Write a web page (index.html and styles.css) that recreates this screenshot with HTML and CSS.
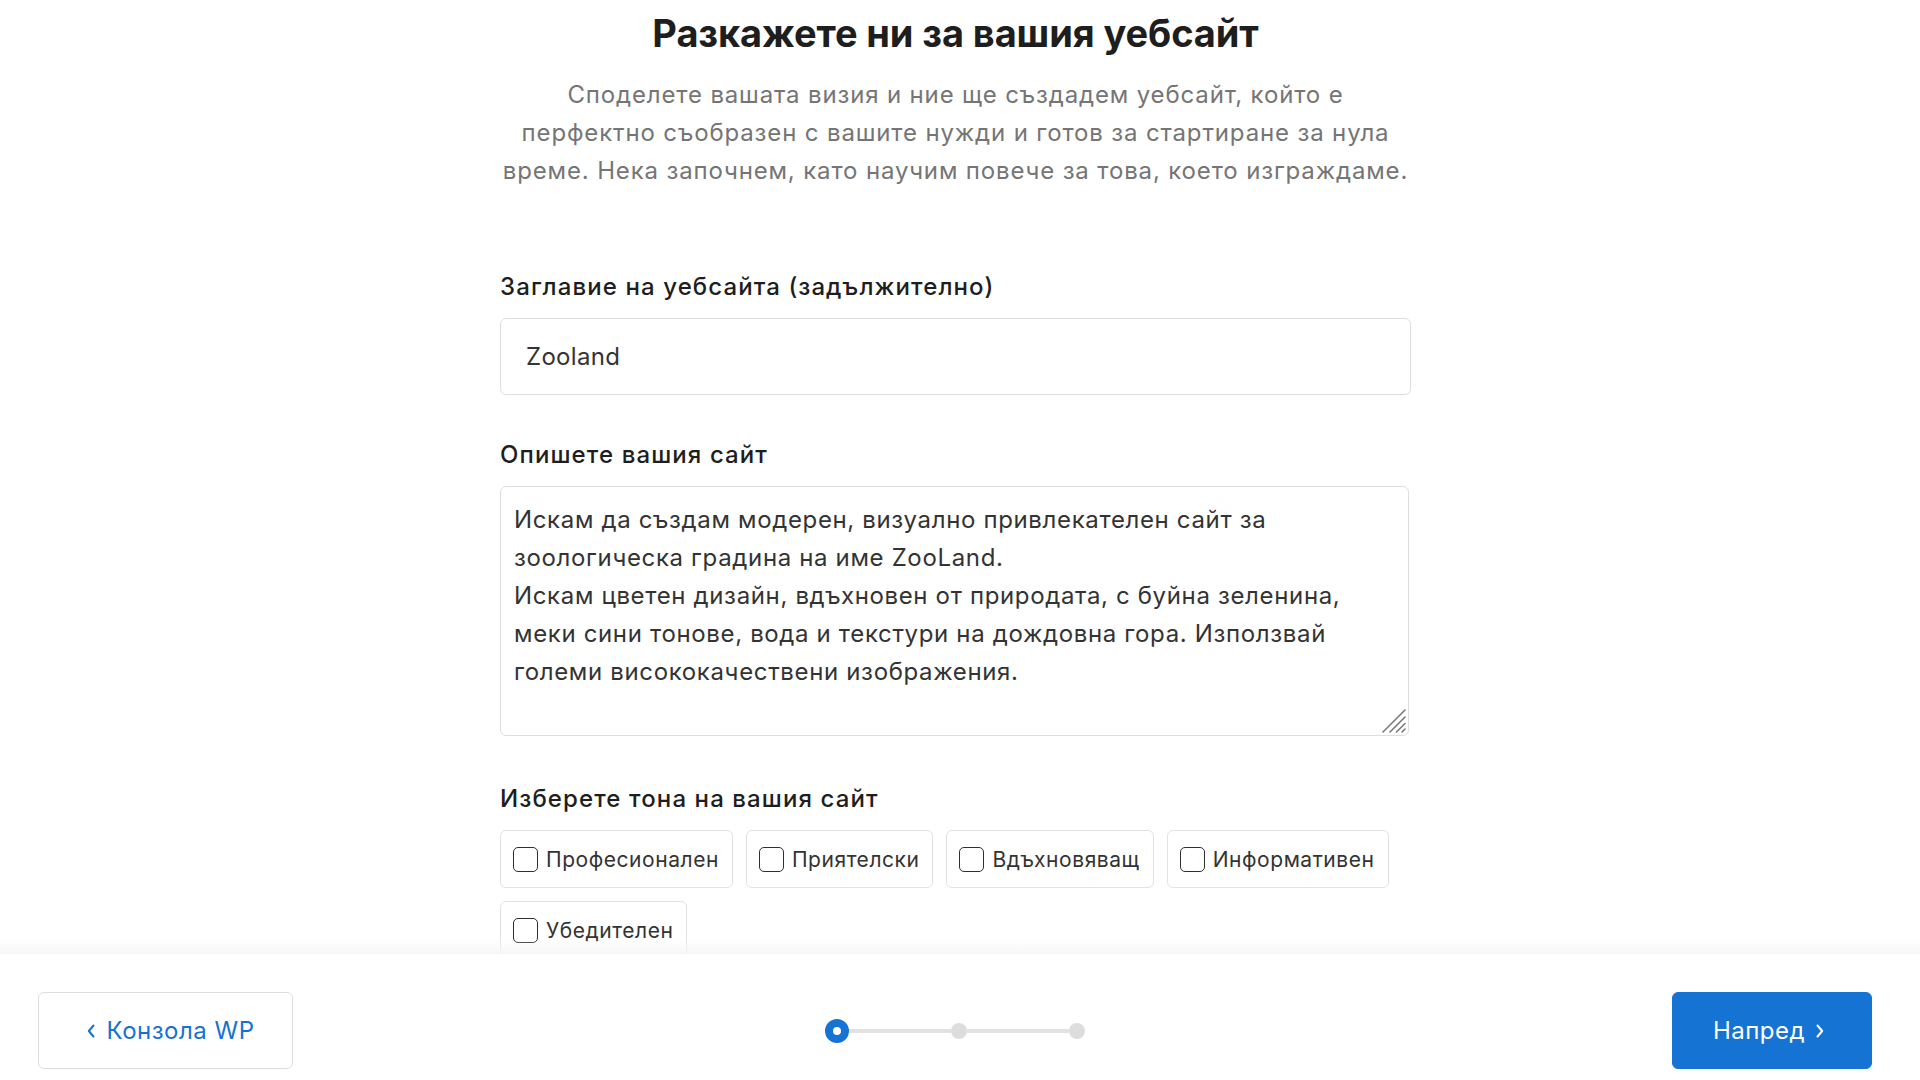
FILE: index.html
```html
<!DOCTYPE html>
<html lang="bg">
<head>
<meta charset="utf-8">
<title>Разкажете ни за вашия уебсайт</title>
<link rel="stylesheet" href="styles.css">
</head>
<body>
<main class="page">
  <div class="content">
    <h1 class="title">Разкажете ни за вашия уебсайт</h1>
    <p class="subtitle">Споделете вашата визия и ние ще създадем уебсайт, който е<br>перфектно съобразен с вашите нужди и готов за стартиране за нула<br>време. Нека започнем, като научим повече за това, което изграждаме.</p>

    <div class="field field-first">
      <label class="label" for="site-title">Заглавие на уебсайта (задължително)</label>
      <input class="input" id="site-title" type="text" value="Zooland">
    </div>

    <div class="field">
      <label class="label" for="site-desc">Опишете вашия сайт</label>
      <div class="textarea-wrap">
        <textarea class="textarea" id="site-desc">Искам да създам модерен, визуално привлекателен сайт за зоологическа градина на име ZooLand.
Искам цветен дизайн, вдъхновен от природата, с буйна зеленина, меки сини тонове, вода и текстури на дождовна гора. Използвай големи висококачествени изображения.</textarea>
        <svg class="grip" width="24" height="24" viewBox="0 0 24 24" aria-hidden="true">
          <path d="M1 23 L23 1 M8 23 L23 8 M14.5 23 L23 14.5 M20 23 L23 20" fill="none" stroke="#7a7a7a" stroke-width="1.6" stroke-linecap="round"/>
        </svg>
      </div>
    </div>

    <div class="field field-tone">
      <span class="label">Изберете тона на вашия сайт</span>
      <div class="chips">
        <label class="chip"><input type="checkbox" class="check"><span>Професионален</span></label>
        <label class="chip"><input type="checkbox" class="check"><span>Приятелски</span></label>
        <label class="chip"><input type="checkbox" class="check"><span>Вдъхновяващ</span></label>
        <label class="chip"><input type="checkbox" class="check"><span>Информативен</span></label>
        <label class="chip"><input type="checkbox" class="check"><span>Убедителен</span></label>
      </div>
    </div>
  </div>
</main>

<footer class="footer">
  <div class="footer-left">
    <button class="btn btn-back" type="button">
      <svg class="chev" width="10" height="16" viewBox="0 0 10 16"><path d="M7.5 2.5 L2.8 8 L7.5 13.5" fill="none" stroke="currentColor" stroke-width="2" stroke-linecap="round" stroke-linejoin="round"/></svg>
      <span>Конзола WP</span>
    </button>
  </div>
  <div class="steps">
    <span class="dot dot-active"></span>
    <span class="line"></span>
    <span class="dot"></span>
    <span class="line"></span>
    <span class="dot"></span>
  </div>
  <div class="footer-right">
    <button class="btn btn-next" type="button">
      <span>Напред</span>
      <svg class="chev" width="10" height="16" viewBox="0 0 10 16"><path d="M2.5 2.5 L7.2 8 L2.5 13.5" fill="none" stroke="currentColor" stroke-width="2" stroke-linecap="round" stroke-linejoin="round"/></svg>
    </button>
  </div>
</footer>
</body>
</html>
```

FILE: styles.css
```css
* { box-sizing: border-box; }

html, body {
  margin: 0;
  padding: 0;
  background: #ffffff;
}

body {
  font-family: Inter, "Noto Sans", "Liberation Sans", sans-serif;
  color: #1e1e1e;
  overflow: hidden;
  height: 1080px;
}

.page {
  padding-top: 10px;
}

.content {
  width: 911px;
  margin-left: calc(50% - 460px);
}

.title {
  margin: 0;
  font-size: 38px;
  line-height: 46px;
  font-weight: 700;
  text-align: center;
  letter-spacing: -0.1px;
  color: #1e1e1e;
}

.subtitle {
  margin: 20px -10px 0;
  font-size: 24px;
  line-height: 38px;
  letter-spacing: 0.85px;
  text-align: center;
  white-space: nowrap;
  color: #757575;
}

.field {
  display: flex;
  flex-direction: column;
  margin-top: 44px;
}

.field-first {
  margin-top: 81px;
}

.field-tone {
  margin-top: 47px;
}

.label {
  font-size: 24px;
  line-height: 31px;
  font-weight: 500;
  letter-spacing: 1.1px;
  color: #1e1e1e;
  margin-bottom: 16px;
}

.input {
  width: 100%;
  height: 77px;
  border: 1px solid #dedede;
  border-radius: 6px;
  padding: 0 25px;
  font-family: inherit;
  font-size: 24px;
  letter-spacing: 0.3px;
  color: #333333;
  background: #fff;
  outline: none;
}

.textarea-wrap {
  position: relative;
  width: calc(100% - 2px);
  height: 250px;
}

.textarea {
  display: block;
  width: 100%;
  height: 100%;
  border: 1px solid #dedede;
  border-radius: 6px;
  padding: 14px 13px;
  font-family: inherit;
  font-size: 24px;
  line-height: 38px;
  letter-spacing: 0.65px;
  color: #333333;
  background: #fff;
  resize: none;
  outline: none;
}

.grip {
  position: absolute;
  right: 3px;
  bottom: 3px;
}

.chips {
  display: flex;
  flex-wrap: wrap;
  gap: 13px;
  width: 900px;
}

.chip {
  display: flex;
  align-items: center;
  gap: 8px;
  height: 58px;
  padding: 0 13px 0 12px;
  border: 1px solid #e2e2e2;
  border-radius: 6px;
  font-size: 21px;
  letter-spacing: 0.55px;
  color: #333333;
  background: #fff;
}

.check {
  appearance: none;
  -webkit-appearance: none;
  margin: 0;
  width: 25px;
  height: 25px;
  border: 1.5px solid #2f2f2f;
  border-radius: 5px;
  background: #fff;
  flex: none;
}

.footer {
  position: fixed;
  left: 0;
  right: 0;
  bottom: 0;
  height: 127px;
  background: #ffffff;
  border-top: 1px solid #ececec;
  display: grid;
  grid-template-columns: 1fr auto 1fr;
  align-items: center;
  align-content: start;
  padding: 38px 48px 0 38px;
}

.footer::before {
  content: "";
  position: absolute;
  left: 0;
  right: 0;
  bottom: 100%;
  height: 14px;
  background: linear-gradient(to bottom, rgba(248, 248, 248, 0), rgba(246, 246, 246, 0.95));
}

.footer-left {
  display: flex;
  justify-content: flex-start;
}

.footer-right {
  display: flex;
  justify-content: flex-end;
}

.btn {
  height: 77px;
  border-radius: 6px;
  display: flex;
  align-items: center;
  justify-content: center;
  gap: 10px;
  font-family: inherit;
  font-size: 24px;
  letter-spacing: 0.5px;
  cursor: pointer;
}

.btn-back {
  width: 255px;
  padding: 0 0 0 10px;
  background: #fff;
  border: 1px solid #dedede;
  color: #1672d0;
}

.btn-next {
  width: 200px;
  padding: 0 6px 0 0;
  background: #1573d3;
  border: 1px solid #1573d3;
  color: #ffffff;
}

.chev {
  flex: none;
}

.steps {
  display: flex;
  align-items: center;
}

.dot {
  width: 16px;
  height: 16px;
  border-radius: 50%;
  background: #dddddd;
  flex: none;
}

.dot-active {
  width: 24px;
  height: 24px;
  background: #fff;
  border: 8px solid #1573d3;
}

.line {
  width: 102px;
  height: 4px;
  background: #e2e2e2;
  flex: none;
}
```
